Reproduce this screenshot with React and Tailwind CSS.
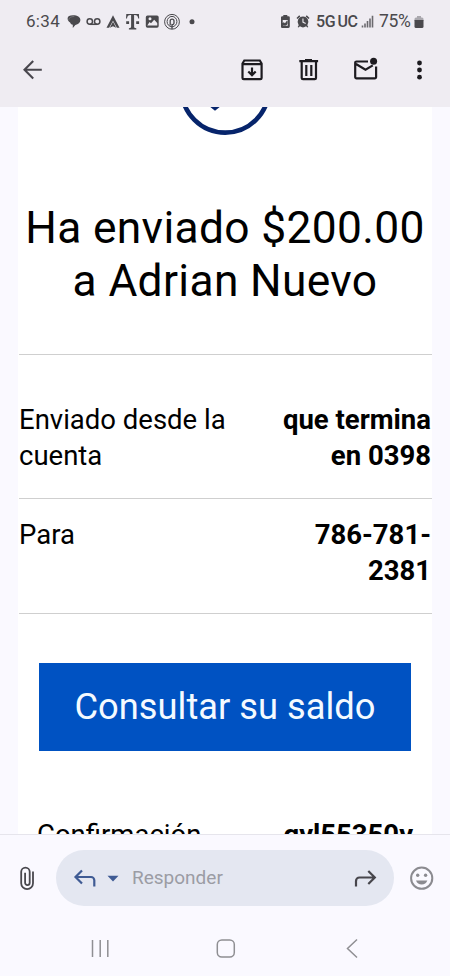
import React from 'react';

const statusLeft = (
  <svg width="138" height="20" viewBox="66 12 138 20" fill="#4a494d">
    {/* chat bubbles */}
    <path d="M67.600 18.500c0-2 2-3.200 5.400-3.200 4.400 0 7.400 1.800 7.400 4.800 0 2.700-2.200 4.500-5 4.800l-2.600 3v-3.200c-1.400-.4-2.400-1.200-2.700-2.300-1.600-.8-2.500-2.100-2.500-3.900z" />
    <path d="M68.800 20.500c-.3-2.500 2-4 5.500-4" fill="none" stroke="#8a898d" strokeWidth=".6" />
    {/* voicemail */}
    <g fill="none" stroke="#4a494d" strokeWidth="1.500">
      <circle cx="89.800" cy="21.500" r="2.700" />
      <circle cx="97.200" cy="21.500" r="2.700" />
      <path d="M89.800 24.300h7.400" />
    </g>
    <path d="M113 15.200l6.500 12.600h-2.600l-3.900-7-3.900 7h-2.600z" />
    <path d="M113 21.800l3.200 6-3.200-1.600-3.200 1.600z" />
    {/* carrier T */}
    <path d="M126.300 14h12.600l.3 4.600h-1c-.3-2.400-1.200-3.500-3.600-3.500h-.5v11.500c0 1.300.5 1.700 2.200 1.700v1.200h-7.400v-1.200c1.700 0 2.200-.4 2.200-1.700V15.100h-.5c-2.400 0-3.300 1.100-3.600 3.500h-1zM126.200 21.300h2.900v2.800h-2.900zM136.200 21.300h2.900v2.800h-2.900z" />
    <path
      fillRule="evenodd"
      d="M147.500 15.500h9.500a1.700 1.700 0 0 1 1.700 1.700v8.900a1.700 1.700 0 0 1-1.700 1.700h-9.500a1.700 1.700 0 0 1-1.700-1.700v-8.900a1.700 1.700 0 0 1 1.700-1.700zM147.300 25.500h10l-.1-2.500-3-3.200-3.200 3.500-1.400-1.300zM150 17.300a1.500 1.500 0 1 0 0 3 1.500 1.500 0 0 0 0-3z"
    />
    {/* spiral */}
    <g fill="none" stroke="#4a494d" strokeWidth="1">
      <circle cx="172" cy="21.800" r="7.400" />
      <ellipse cx="172" cy="21.600" rx="4.900" ry="5.200" />
      <path d="M170.200 25.500v-4.500a1.900 1.900 0 0 1 3.800 0v2a1.700 1.700 0 0 1-2 1.600v4.400" strokeWidth="1.300" />
    </g>
    <circle cx="192" cy="21.800" r="2.500" />
  </svg>
);

const StatusBar = () => (
  <div className="flex h-[43px] items-center pl-[26px] pr-[26px] text-[#4a494d]">
    <span className="w-[40px] text-[17px] tracking-[0.3px]">6:34</span>
    {statusLeft}
    <div className="ml-auto flex items-center">
      <svg width="36" height="16" viewBox="281 14 36 16" fill="#4a494d">
        <path
          fillRule="evenodd"
          d="M283.300 15h4v1.300h1.200a1.300 1.300 0 0 1 1.300 1.300v9a1.300 1.300 0 0 1-1.300 1.300h-6.300a1.300 1.300 0 0 1-1.300-1.300v-9a1.300 1.300 0 0 1 1.300-1.300h1.100zM282.700 20v3l1-.8 1.300 1 2-2.700.5.400v2.500a2.400 2.400 0 0 1-4 1.500v.8h4.300V20z"
        />
        <path
          fillRule="evenodd"
          d="M303 16.500a5.400 5.400 0 0 1 4.300 8.700l1 1.700-1 .7-1.200-1.300a5.400 5.400 0 0 1-6.200 0l-1.200 1.300-1-.7 1-1.700a5.400 5.400 0 0 1 4.300-8.700zM302.400 18.500v4l3 1.500.5-.9-2.400-1.300v-3.300z"
        />
        <path d="M297 18.500l2.800-2.600M309 18.500l-2.800-2.600" stroke="#4a494d" strokeWidth="1.600" />
      </svg>
      <span className="-ml-[1px] w-[45px] text-[16px] font-medium tracking-[-0.3px]">5G<span className="ml-[2px]">UC</span></span>
      <svg width="13" height="13" viewBox="0 0 13 13" stroke="#6b6a6e" strokeWidth="1.600">
        <path d="M1.500 12.500v-2M4 12.500V8.500M6.500 12.500V6M9 12.500V3.500M11.500 12.500V.8" />
      </svg>
      <span className="ml-[5px] w-[35px] text-[17.500px] tracking-[-0.3px]">75%</span>
      <svg width="10" height="14" viewBox="0 0 10 14">
        <path d="M3 1h4v1.500H3zM.5 4a1.500 1.500 0 0 1 1.500-1.500h6A1.500 1.500 0 0 1 9.500 4v2h-9z" fill="#aaa8ae" />
        <path d="M.5 5h9v6.500A1.500 1.500 0 0 1 8 13H2A1.500 1.500 0 0 1 .5 11.500z" fill="#4a494d" />
      </svg>
    </div>
  </div>
);

const Toolbar = () => (
  <div className="flex h-[64px] items-start pl-[20px] pr-[24px] pt-[13px] text-[#1d1b20]">
    <svg width="24" height="28" viewBox="20 56 24 28" fill="none" stroke="#49474e" strokeWidth="2.100">
      <path d="M41.800 69.700H24.500M33.200 61l-8.700 8.700 8.700 8.700" />
    </svg>
    <svg className="ml-auto" width="190" height="28" viewBox="236 56 190 28" fill="none" stroke="#1d1b20" strokeWidth="2.200">
      <path d="M242.500 63.500v14.400a1.300 1.300 0 0 0 1.300 1.300h16.500a1.300 1.300 0 0 0 1.300-1.300V63.500l-1.800-3h-15.500zM242.500 64.200h19.100M252 67.500v7M248.300 71.500l3.700 3.600 3.700-3.600" />
      <path d="M299.300 61.200h18.800M301.700 61.200v16.700a1.300 1.300 0 0 0 1.300 1.300h11.700a1.300 1.300 0 0 0 1.300-1.300V61.200M306.300 65v11M311.300 65v11" />
      <path d="M305 60h7" strokeWidth="2" />
      <path d="M368 61.500h-11.500a1.300 1.300 0 0 0-1.300 1.300v14.200a1.300 1.300 0 0 0 1.300 1.300h18.300a1.300 1.300 0 0 0 1.300-1.300V66.500M356 64l9.500 5.700 7.300-4.300" />
      <g fill="#1d1b20" stroke="none">
        <circle cx="373.600" cy="61.300" r="3.500" />
        <circle cx="419.500" cy="63" r="2.400" />
        <circle cx="419.500" cy="70" r="2.400" />
        <circle cx="419.500" cy="77.200" r="2.400" />
      </g>
    </svg>
  </div>
);

const Row = ({ label, children, className }) => (
  <div className={`flex justify-between border-b border-[#cfcfcf] pr-[1px] text-[27.5px] leading-[36.400px] ${className}`}>
    <span className="w-[220px]">{label}</span>
    <span className="text-right font-bold">{children}</span>
  </div>
);

const Email = () => (
  <main className="ml-[18px] mr-[18px] h-[727px] shrink-0 overflow-hidden bg-white pl-[1px] text-black">
    <svg className="ml-[156px] block" width="100" height="30" viewBox="175 107 100 30">
      <circle cx="225.200" cy="89.100" r="43.500" fill="none" stroke="#06246b" strokeWidth="4.600" />
      <path d="M209.500 105l5.500 4.600 5.500-4.600" fill="#06246b" stroke="#06246b" strokeWidth="2" strokeLinejoin="round" />
    </svg>
    <h1 className="h-[217px] whitespace-nowrap pt-[65px] pr-[1px] text-center text-[44.300px] leading-[53px] tracking-[0.35px]">
      Ha enviado $200.00
      <br />a Adrian Nuevo
    </h1>
    <hr className="border-[#cfcfcf]" />
    <Row className="h-[144px] pt-[47px]" label={<>Enviado desde la<br />cuenta</>}>
      que termina<br />en 0398
    </Row>
    <Row className="h-[115px] pt-[18px]" label="Para">
      786-781-<br />2381
    </Row>
    <button className="ml-[20px] mt-[49px] flex h-[88px] w-[372px] items-center justify-center bg-[#0052c2] text-[36.300px] text-[#f4faff]">
      Consultar su saldo
    </button>
    <div className="mt-[66px] flex justify-between pl-[18px] pr-[19px] text-[27.5px] leading-[36.400px]">
      <span>Confirmación</span>
      <span className="font-bold">gyl55350y</span>
    </div>
  </main>
);

const ReplyBar = () => (
  <div className="flex h-[87px] shrink-0 items-center border-t border-[#e6e5ec] pb-[1px] pl-[18px] pr-[14px]">
    <svg width="20" height="28" viewBox="18 863 20 28" fill="none" stroke="#49484e" strokeWidth="1.800">
      <path d="M33 870.500v11.800a5.900 5.900 0 0 1-11.800 0v-11.500a4.200 4.200 0 0 1 8.500 0v11a2.300 2.300 0 0 1-4.600 0v-10" />
    </svg>
    <div className="ml-[18px] flex h-[56px] w-[338px] items-center rounded-full bg-[#e4e7f1] pl-[16px] pr-[16px]">
      <svg width="50" height="24" viewBox="72 865 50 24" fill="none" stroke="#3f5b94" strokeWidth="2.200">
        <path d="M82 869.500l-6.500 6.500 6.500 6.500M75.500 876H91a3.300 3.300 0 0 1 3.300 3.300v6.200" />
        <path d="M107.500 874.700h11l-5.500 5.700z" fill="#3f5b94" stroke="none" />
      </svg>
      <span className="ml-[10px] pt-[2px] text-[19px] text-[#9b9ca4]">Responder</span>
      <svg className="ml-auto" width="26" height="24" viewBox="352 865 26 24" fill="none" stroke="#47464c" strokeWidth="2.200">
        <path d="M368.300 870l6.500 6.500-6.500 6.500M374.800 876.500H359.500a3.500 3.500 0 0 0-3.500 3.500v5.500" />
      </svg>
    </div>
    <svg className="ml-auto" width="28" height="28" viewBox="408 863 28 28" fill="none" stroke="#8b8b90" strokeWidth="2">
      <circle cx="421.700" cy="877.200" r="10.600" />
      <g fill="#8b8b90" stroke="none">
        <circle cx="417.700" cy="874.300" r="1.700" />
        <circle cx="425.600" cy="874.300" r="1.700" />
        <path d="M416 879.500h11.300c-.8 2.500-3 4-5.600 4s-4.900-1.500-5.700-4z" />
      </g>
    </svg>
  </div>
);

const NavBar = () => (
  <div className="flex h-[55px] shrink-0 items-start justify-between pl-[86px] pr-[84px] pt-[13px]">
    <svg width="28" height="28" viewBox="86 934 28 28" stroke="#8f8f93" strokeWidth="1.500">
      <path d="M92.500 940v17M100.200 940v17M107.800 940v17" />
    </svg>
    <svg width="28" height="28" viewBox="212 934 28 28" fill="none" stroke="#8f8f93" strokeWidth="1.500">
      <rect x="217.300" y="940" width="17" height="17" rx="4.500" />
    </svg>
    <svg width="28" height="28" viewBox="338 934 28 28" fill="none" stroke="#8f8f93" strokeWidth="1.500">
      <path d="M357 939.500l-9.500 9 9.500 9" />
    </svg>
  </div>
);

const App = () => (
  <div className="flex h-[976px] w-[450px] flex-col overflow-hidden bg-[#faf9ff] font-['Roboto',sans-serif]">
    <header className="h-[107px] shrink-0 bg-[#efecf2]">
      <StatusBar />
      <Toolbar />
    </header>
    <Email />
    <ReplyBar />
    <NavBar />
  </div>
);

export default App;
